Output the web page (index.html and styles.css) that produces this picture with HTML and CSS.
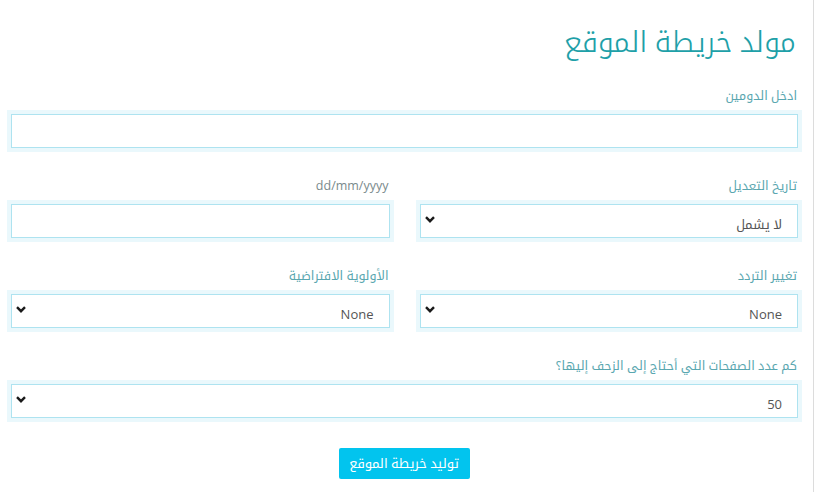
FILE: index.html
```html
<!DOCTYPE html>
<html lang="ar" dir="rtl">
<head>
<meta charset="utf-8">
<title>مولد خريطة الموقع</title>
<link rel="stylesheet" href="styles.css">
</head>
<body>
<div class="page">
  <form class="form">
    <h1 class="title">مولد خريطة الموقع</h1>

    <div class="group">
      <label class="label">ادخل الدومين</label>
      <div class="field"><input class="control" type="text"></div>
    </div>

    <div class="row">
      <div class="group">
        <label class="label">تاريخ التعديل</label>
        <div class="field">
          <select class="control select"><option>لا يشمل</option></select>
          <svg class="chev" width="10" height="7" viewBox="0 0 10 7"><path d="M1 1.2 L5 5.2 L9 1.2" fill="none" stroke="#1a1a1a" stroke-width="2.4"/></svg>
        </div>
      </div>
      <div class="group">
        <label class="label latin">dd/mm/yyyy</label>
        <div class="field"><input class="control" type="text"></div>
      </div>
    </div>

    <div class="row">
      <div class="group">
        <label class="label">تغيير التردد</label>
        <div class="field">
          <select class="control select"><option>None</option></select>
          <svg class="chev" width="10" height="7" viewBox="0 0 10 7"><path d="M1 1.2 L5 5.2 L9 1.2" fill="none" stroke="#1a1a1a" stroke-width="2.4"/></svg>
        </div>
      </div>
      <div class="group">
        <label class="label">الأولوية الافتراضية</label>
        <div class="field">
          <select class="control select"><option>None</option></select>
          <svg class="chev" width="10" height="7" viewBox="0 0 10 7"><path d="M1 1.2 L5 5.2 L9 1.2" fill="none" stroke="#1a1a1a" stroke-width="2.4"/></svg>
        </div>
      </div>
    </div>

    <div class="group">
      <label class="label">كم عدد الصفحات التي أحتاج إلى الزحف إليها؟</label>
      <div class="field">
        <select class="control select"><option>50</option></select>
        <svg class="chev" width="10" height="7" viewBox="0 0 10 7"><path d="M1 1.2 L5 5.2 L9 1.2" fill="none" stroke="#1a1a1a" stroke-width="2.4"/></svg>
      </div>
    </div>

    <div class="actions">
      <button class="btn" type="button">توليد خريطة الموقع</button>
    </div>
  </form>
</div>
</body>
</html>
```

FILE: styles.css
```css
html, body {
  margin: 0;
  padding: 0;
  background: #fff;
}
body {
  font-family: "Open Sans", "Noto Kufi Arabic", "Noto Sans Arabic", "DejaVu Sans", sans-serif;
  color: #555;
}
.page {
  width: 814px;
  min-height: 100vh;
  box-sizing: border-box;
  margin: 0 auto 0 0;
  border-right: 1px solid #dcdcdc;
  padding: 0 11px 0 7px;
}
.form {
  display: flex;
  flex-direction: column;
}
.title {
  margin: 21px 6px 25px 0;
  font-size: 29px;
  line-height: 40px;
  font-weight: 300;
  color: #1ea0a8;
}
.group {
  display: flex;
  flex-direction: column;
  margin-bottom: 24px;
}
.row {
  display: grid;
  grid-template-columns: 1fr 1fr;
  column-gap: 22px;
}
.label {
  padding-right: 5px;
  font-size: 12.5px;
  line-height: 20px;
  height: 20px;
  margin-bottom: 4px;
  color: #5aa7b0;
}
.label.latin {
  color: #7a8a8c;
}
.field {
  position: relative;
  background: #eaf8fc;
  padding: 4px;
}
.control {
  display: block;
  width: 100%;
  height: 34px;
  box-sizing: border-box;
  border: 1px solid #aee3f0;
  background: #fff;
  border-radius: 0;
  outline: none;
  margin: 0;
  font-family: inherit;
  font-size: 13px;
  color: #555;
}
.select {
  -webkit-appearance: none;
  appearance: none;
  padding: 5px 15px 0 30px;
}
.chev {
  position: absolute;
  left: 9px;
  top: 16px;
  pointer-events: none;
}
.actions {
  display: flex;
  justify-content: center;
  margin-top: 2px;
}
.btn {
  width: 131px;
  height: 31px;
  border: none;
  border-radius: 2px;
  background: #02c4ee;
  color: #fff;
  font-family: inherit;
  font-size: 13px;
  padding: 0;
  margin-right: 1px;
}
```
